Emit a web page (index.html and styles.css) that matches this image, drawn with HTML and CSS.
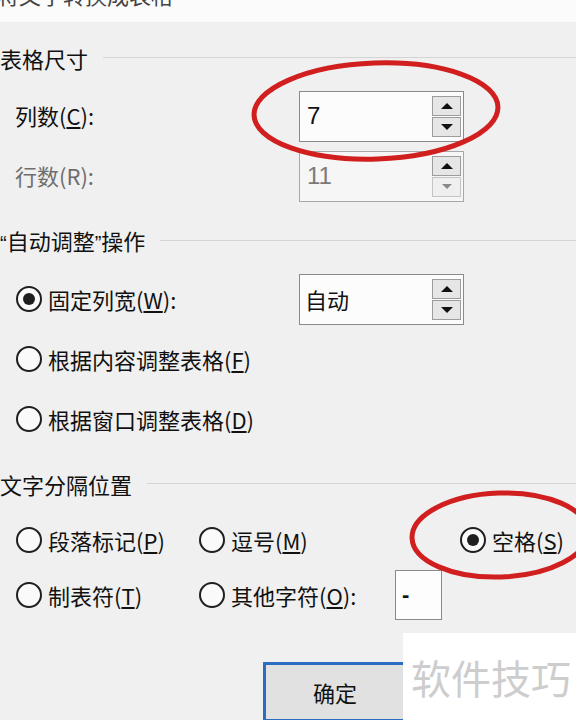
FILE: index.html
```html
<!DOCTYPE html>
<html lang="zh-CN">
<head>
<meta charset="utf-8">
<title>将文字转换成表格</title>
<link rel="stylesheet" href="styles.css">
</head>
<body>
<div class="dialog">
  <div class="titlebar"><span class="title">将文字转换成表格</span></div>

  <div class="group-head first"><span class="group-title">表格尺寸</span><span class="rule"></span></div>
  <div class="rows">
    <div class="form-row">
      <span class="label">列数(<u>C</u>):</span>
      <div class="spin"><span class="value">7</span><div class="spin-btns"><span class="sb up"></span><span class="sb down"></span></div></div>
    </div>
    <div class="form-row">
      <span class="label disabled">行数(R):</span>
      <div class="spin off"><span class="value">11</span><div class="spin-btns"><span class="sb up"></span><span class="sb down dim"></span></div></div>
    </div>
  </div>

  <div class="group-head second"><span class="group-title quoted"><span class="q">“</span>自动调整<span class="q">”</span>操作</span><span class="rule"></span></div>
  <div class="rows">
    <div class="form-row radio-row">
      <span class="opt wide"><span class="radio on"></span><span class="opt-text">固定列宽(<u>W</u>):</span></span>
      <div class="spin"><span class="value cjk">自动</span><div class="spin-btns"><span class="sb up"></span><span class="sb down"></span></div></div>
    </div>
    <div class="form-row radio-row">
      <span class="opt"><span class="radio"></span><span class="opt-text">根据内容调整表格(<u>F</u>)</span></span>
    </div>
    <div class="form-row radio-row">
      <span class="opt"><span class="radio"></span><span class="opt-text">根据窗口调整表格(<u>D</u>)</span></span>
    </div>
  </div>

  <div class="group-head third"><span class="group-title">文字分隔位置</span><span class="rule"></span></div>
  <div class="opt-grid">
    <span class="opt"><span class="radio"></span><span class="opt-text">段落标记(<u>P</u>)</span></span>
    <span class="opt"><span class="radio"></span><span class="opt-text">逗号(<u>M</u>)</span></span>
    <span class="opt"><span class="radio on"></span><span class="opt-text">空格(<u>S</u>)</span></span>
    <span class="opt"><span class="radio"></span><span class="opt-text">制表符(<u>T</u>)</span></span>
    <span class="opt other"><span class="radio"></span><span class="opt-text fixed">其他字符(<u>O</u>):</span><span class="charbox">-</span></span>
  </div>

  <div class="btn-row"><span class="btn">确定</span></div>

  <svg class="marks" width="576" height="720" viewBox="0 0 576 720" aria-hidden="true">
    <ellipse cx="376" cy="111" rx="122" ry="48" transform="rotate(-2 376 111)" />
    <ellipse cx="500" cy="535" rx="88" ry="42" transform="rotate(-2 500 535)" />
  </svg>

  <div class="watermark">软件技巧</div>
</div>
</body>
</html>
```

FILE: styles.css
```css
html, body {
  margin: 0;
  padding: 0;
}

body {
  background: #f0f0f0;
  font-family: "Noto Sans CJK SC", "Noto Sans", sans-serif;
  color: #111;
}

.dialog {
  position: relative;
  width: 576px;
  height: 720px;
  overflow: hidden;
  background: #f0f0f0;
}

.titlebar {
  height: 22px;
  background: #fbfbfb;
  overflow: hidden;
}

.title {
  display: block;
  font-size: 22px;
  line-height: 22px;
  margin-top: -17px;
  margin-left: -3px;
  color: #444;
  white-space: nowrap;
}

.group-head {
  display: flex;
  align-items: center;
  height: 26px;
  gap: 15px;
}

.group-head.first { margin-top: 23px; }
.group-head.second { margin-top: 22px; }
.group-head.third { margin-top: 22px; }

.group-title {
  font-size: 22px;
  line-height: 26px;
  white-space: nowrap;
}

.q {
  font-family: "Liberation Sans", sans-serif;
  font-size: 20px;
}

.rule {
  flex: 1;
  height: 1px;
  margin-top: -2px;
  background: #d4d4d4;
}

.rows {
  margin-top: 15px;
}

.form-row {
  display: flex;
  align-items: center;
  height: 60px;
}

.label {
  width: 299px;
  box-sizing: border-box;
  padding-left: 15px;
  font-size: 22px;
  white-space: nowrap;
  margin-top: -2px;
}

.label.disabled {
  color: #6e6e6e;
}

.spin {
  width: 165px;
  height: 51px;
  box-sizing: border-box;
  border: 1px solid #8a8a8a;
  background: #fcfcfc;
  display: flex;
  align-items: center;
}

.spin.off {
  background: #f6f6f6;
  border-color: #a8a8a8;
}

.value {
  flex: 1;
  padding-left: 7px;
  font-size: 24px;
  font-family: "Liberation Sans", "Noto Sans CJK SC", sans-serif;
  color: #111;
}

.spin.off .value {
  color: #7a7a7a;
}

.value.cjk {
  font-family: "Noto Sans CJK SC", sans-serif;
  font-size: 22px;
  padding-left: 5px;
}

.spin-btns {
  display: flex;
  flex-direction: column;
  gap: 1px;
  margin-right: 2px;
}

.sb {
  width: 29px;
  height: 20px;
  box-sizing: border-box;
  border: 1px solid #9c9c9c;
  background: #e6e6e6;
  display: flex;
  align-items: center;
  justify-content: center;
}

.sb.up::after {
  content: "";
  border-left: 6px solid transparent;
  border-right: 6px solid transparent;
  border-bottom: 6px solid #111;
}

.sb.down::after {
  content: "";
  border-left: 6px solid transparent;
  border-right: 6px solid transparent;
  border-top: 6px solid #111;
}

.sb.dim {
  background: #efefef;
  border-color: #c4c4c4;
}

.sb.down.dim::after {
  border-left-width: 5px;
  border-right-width: 5px;
  border-top: 5px solid #8a8a8a;
}

.radio-row {
  padding-left: 16px;
}

.opt {
  display: flex;
  align-items: center;
  white-space: nowrap;
}

.opt.wide {
  width: 283px;
}

.radio {
  width: 26px;
  height: 26px;
  box-sizing: border-box;
  border: 2px solid #1f1f1f;
  border-radius: 50%;
  background: #fafafa;
  display: flex;
  align-items: center;
  justify-content: center;
  flex: none;
}

.radio.on::after {
  content: "";
  width: 12px;
  height: 12px;
  border-radius: 50%;
  background: #1f1f1f;
}

.opt-text {
  margin-left: 6px;
  font-size: 22px;
  color: #111;
}

.opt-text.fixed {
  width: 164px;
}

.opt-text u {
  text-underline-offset: 2px;
}

.opt-grid {
  display: grid;
  grid-template-columns: 183px 261px 1fr;
  grid-auto-rows: 55px;
  align-items: center;
  padding-left: 16px;
  margin-top: 15px;
}

.charbox {
  width: 47px;
  height: 50px;
  box-sizing: border-box;
  border: 1px solid #8a8a8a;
  background: #fdfdfd;
  display: flex;
  align-items: center;
  padding-left: 6px;
  font-size: 22px;
  font-family: "Liberation Sans", sans-serif;
  font-weight: bold;
}

.btn-row {
  margin-top: 40px;
  padding-left: 263px;
}

.btn {
  width: 144px;
  height: 60px;
  box-sizing: border-box;
  border: 3px solid #2a6ec4;
  background: #e1e1e1;
  display: flex;
  align-items: center;
  justify-content: center;
  font-size: 22px;
  color: #111;
}

.marks {
  position: absolute;
  left: 0;
  top: 0;
  pointer-events: none;
}

.marks ellipse {
  fill: none;
  stroke: #d11f1f;
  stroke-width: 5;
}

.watermark {
  position: absolute;
  left: 403px;
  top: 633px;
  width: 173px;
  height: 87px;
  box-sizing: border-box;
  background: #ffffff;
  display: flex;
  align-items: center;
  padding-left: 8px;
  font-size: 40px;
  color: #cdcdcd;
  white-space: nowrap;
}
```
